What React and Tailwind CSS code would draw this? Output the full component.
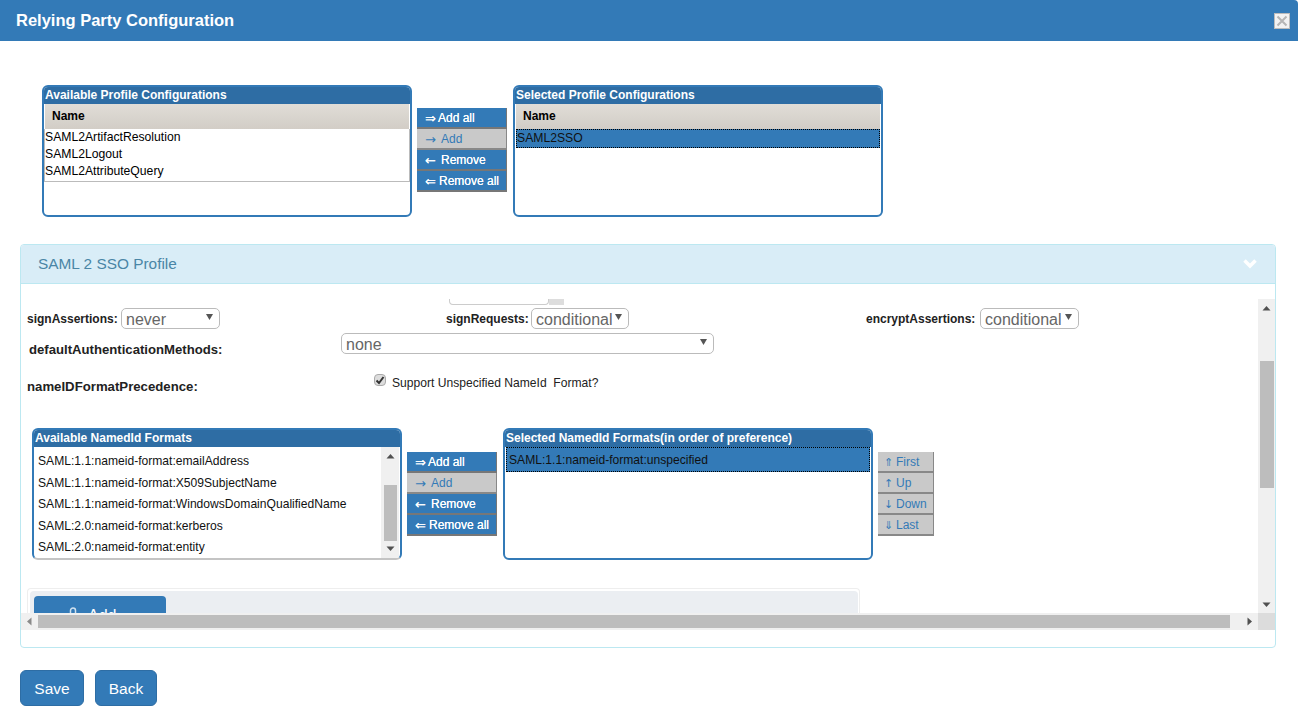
const mainButtons = [
  { arrow: '⇒', label: 'Add all', on: true, arrowClass: 'w-[13px]' },
  { arrow: '→', label: 'Add', on: false, arrowClass: 'w-[16px]' },
  { arrow: '←', label: 'Remove', on: true, arrowClass: 'w-[16px]' },
  { arrow: '⇐', label: 'Remove all', on: true, arrowClass: 'w-[14px]' },
];

const orderButtons = [
  { arrow: '⇑', label: 'First' },
  { arrow: '↑', label: 'Up' },
  { arrow: '↓', label: 'Down' },
  { arrow: '⇓', label: 'Last' },
];

const availableFormats = [
  'SAML:1.1:nameid-format:emailAddress',
  'SAML:1.1:nameid-format:X509SubjectName',
  'SAML:1.1:nameid-format:WindowsDomainQualifiedName',
  'SAML:2.0:nameid-format:kerberos',
  'SAML:2.0:nameid-format:entity',
];

function Arrow({ dir }) {
  const points = {
    up: '0.5,6.500 4.500,2 8.500,6.500',
    down: '0.5,2.500 8.500,2.500 4.500,7',
    left: '6.500,0.500 6.500,8.500 2,4.500',
    right: '2.500,0.500 2.500,8.500 7,4.500',
  };
  return (
    <svg width="9" height="9" viewBox="0 0 9 9" className="shrink-0">
      <polygon points={points[dir]} fill={dir === 'left' ? '#8a8a8a' : '#505050'} />
    </svg>
  );
}

function Panel({ title, children, className = '' }) {
  return (
    <div className={`h-[132px] overflow-hidden rounded-md border-2 border-[#337ab7] bg-white ${className}`}>
      <div className="h-[17px] bg-[#2e6da4] pl-px text-[12px] leading-[17px] font-bold text-white">{title}</div>
      {children}
    </div>
  );
}

function TableHead() {
  return (
    <div className="mx-px h-[25px] bg-gradient-to-b from-[#e0ddd7] to-[#d2cdc6] pl-[7px] text-[12px] leading-[25px] font-bold text-black">
      Name
    </div>
  );
}

function ActionButtons({ className = '' }) {
  return (
    <div className={`flex w-[90px] flex-col ${className}`}>
      {mainButtons.map((b) => (
        <div
          key={b.label}
          className={`flex h-[21px] border-r border-b-2 pl-2 text-[12px] leading-[21px] ${
            b.on
              ? 'border-[#777] bg-[#337ab7] text-white [text-shadow:0_0_0.4px_white]'
              : 'border-[#888] bg-[#c9c9c9] text-[#337ab7]'
          }`}
        >
          <span className={`${b.arrowClass} font-['DejaVu_Sans',sans-serif] text-[13px]`}>{b.arrow}</span>
          <span>{b.label}</span>
        </div>
      ))}
    </div>
  );
}

function Select({ value, className = '' }) {
  return (
    <div className={`relative h-[21px] ${className}`}>
      <select
        defaultValue={value}
        className="h-full w-full appearance-none rounded-[5px] border border-[#bbb] bg-white pt-px pl-1 text-[16px] leading-[19px] font-normal text-[#666]"
      >
        <option>{value}</option>
      </select>
      <svg width="7" height="6" viewBox="0 0 7 6" className="pointer-events-none absolute top-[6px] right-[7px]">
        <polygon points="0,0 7,0 3.500,6" fill="#555" />
      </svg>
    </div>
  );
}

export default function App() {
  return (
    <div className="h-[727px] overflow-hidden bg-white font-['Liberation_Sans',Arial,sans-serif]">
      <header className="flex h-[41px] items-center justify-between rounded-tr-sm bg-[#337ab7] pr-2 pl-4">
        <h1 className="text-[16.5px] font-bold text-white">Relying Party Configuration</h1>
        <button className="flex h-4 w-4 items-center justify-center border border-[#bbb] bg-[#f2f2f2]">
          <svg width="12" height="12" viewBox="0 0 12 12">
            <path d="M1.500 1.500 10.500 10.500M10.500 1.500 1.500 10.500" stroke="#b5b5b5" strokeWidth="2" />
          </svg>
        </button>
      </header>

      <main className="px-5">
        <div className="flex pt-[44px] pl-[22px]">
          <Panel title="Available Profile Configurations" className="w-[370px]">
            <TableHead />
            <div className="border-x border-b border-[#bbb] pb-px text-[12.200px] leading-[17px] text-black">
              <div>SAML2ArtifactResolution</div>
              <div>SAML2Logout</div>
              <div>SAML2AttributeQuery</div>
            </div>
          </Panel>
          <ActionButtons className="mt-[23px] ml-[5px]" />
          <Panel title="Selected Profile Configurations" className="ml-[6px] w-[370px]">
            <TableHead />
            <div className="mx-px h-[19px] bg-[#337ab7] pl-px text-[12.200px] leading-[18px] text-[#111] outline-1 outline-offset-[-1px] outline-black outline-dotted">
              SAML2SSO
            </div>
          </Panel>
        </div>

        <section className="mt-[27px] h-[404px] w-[1256px] overflow-hidden rounded border border-[#bce8f1]">
          <div className="flex h-[39px] items-center justify-between border-b border-[#bce8f1] bg-[#d9edf7] px-[17px]">
            <h2 className="text-[15.400px] text-[#4a86a6]">SAML 2 SSO Profile</h2>
            <svg width="16" height="12" viewBox="0 0 16 12">
              <path d="M2.500 2.500 8 8l5.500-5.500" fill="none" stroke="#fff" strokeWidth="3.500" />
            </svg>
          </div>

          <div className="pt-[15px]">
            <div className="flex h-[331px]">
              <div className="flex min-w-0 flex-1 flex-col">
                <div className="h-[314px] overflow-hidden pl-[6px]">
                  {/* clipped field scrolled out of the top */}
                  <div className="ml-[422px] flex h-[6px] w-[115px]">
                    <div className="flex-1 rounded-b-sm border border-t-0 border-[#ccc]" />
                    <div className="w-[15px] bg-[#ddd]" />
                  </div>

                  <div className="mt-[3px] flex h-[21px] items-center text-[12px] font-bold text-[#222]">
                    <span className="w-[94px]">signAssertions:</span>
                    <Select value="never" className="w-[99px]" />
                    <span className="ml-[226px] w-[85px]">signRequests:</span>
                    <Select value="conditional" className="w-[98px]" />
                    <span className="ml-[237px] w-[114px]">encryptAssertions:</span>
                    <Select value="conditional" className="w-[99px]" />
                  </div>

                  <div className="mt-[4px] flex h-[21px] text-[13.150px] font-bold text-[#222]">
                    <span className="mt-[8px] ml-[2px] w-[312px] leading-[18px]">defaultAuthenticationMethods:</span>
                    <Select value="none" className="w-[373px]" />
                  </div>

                  <div className="mt-[20px] flex h-[24px]">
                    <span className="mt-[4px] w-[347px] text-[13.200px] leading-[18px] font-bold text-[#222]">nameIDFormatPrecedence:</span>
                    <span className="flex h-3 w-3 items-center justify-center rounded-sm border border-[#aaa] bg-[#ddd]">
                      <svg width="10" height="10" viewBox="0 0 10 10">
                        <path d="M1.500 5.500 4 8l4.500-6" fill="none" stroke="#333" strokeWidth="2" />
                      </svg>
                    </span>
                    <span className="ml-[6px] pt-px text-[12.100px] leading-[16px] whitespace-pre text-[#222]">Support Unspecified NameId  Format?</span>
                  </div>

                  <div className="mt-[30px] ml-[5px] flex">
                    <Panel title="Available NamedId Formats" className="w-[370px] border-b-[#c4c4c4]">
                      <div className="flex h-[111px]">
                        <div className="flex-1 pt-[4px] pl-1 text-[12.100px] leading-[21.500px] text-[#111]">
                          {availableFormats.map((f) => (
                            <div key={f}>{f}</div>
                          ))}
                        </div>
                        <div className="mr-px flex w-[18px] flex-col items-center bg-[#f0f0f0] pt-[5px] pb-[5px]">
                          <Arrow dir="up" />
                          <div className="mt-[24px] h-[56px] w-[13px] bg-[#bdbdbd]" />
                          <div className="mt-auto">
                            <Arrow dir="down" />
                          </div>
                        </div>
                      </div>
                    </Panel>
                    <ActionButtons className="mt-[24px] ml-[5px]" />
                    <Panel title="Selected NamedId Formats(in order of preference)" className="ml-[6px] w-[370px]">
                      <div className="mx-px h-[25px] bg-[#337ab7] pl-[3px] text-[12.100px] leading-[27px] text-[#111] outline-1 outline-offset-[-1px] outline-black outline-dotted">
                        SAML:1.1:nameid-format:unspecified
                      </div>
                    </Panel>
                    <div className="mt-[24px] ml-[5px] flex w-[56px] flex-col">
                      {orderButtons.map((b) => (
                        <div
                          key={b.label}
                          className="flex h-[21px] border-r border-b-2 border-[#888] bg-[#c9c9c9] pl-[6px] text-[12px] leading-[21px] text-[#337ab7]"
                        >
                          <span className="w-[12px] font-['DejaVu_Sans',sans-serif] text-[11px]">{b.arrow}</span>
                          <span>{b.label}</span>
                        </div>
                      ))}
                    </div>
                  </div>

                  <div className="mt-[28px] w-[833px] rounded-t border border-b-0 border-[#eee] pt-[2px] pr-px pl-[2px]">
                    <div className="h-[40px] rounded-t bg-[#ebeef2] px-[4px] pt-[5px]">
                      <button className="flex h-[34px] w-[132px] items-start gap-[9px] rounded-t bg-[#337ab7] pt-[11px] pl-[33px] text-[16px] leading-[18px] text-white">
                        <svg width="12" height="14" viewBox="0 0 12 14">
                          <path d="M3.500 12V3.500a2.500 2.500 0 0 1 5 0V12M1 8h10v5H1z" fill="none" stroke="#cfe0ee" strokeWidth="1.500" />
                        </svg>
                        Add
                      </button>
                    </div>
                  </div>
                </div>

                {/* horizontal scrollbar */}
                <div className="flex h-[17px] items-center bg-[#f0f0f0]">
                  <div className="flex w-[17px] justify-center">
                    <Arrow dir="left" />
                  </div>
                  <div className="h-[13px] w-[1192px] bg-[#bdbdbd]" />
                  <div className="flex flex-1 justify-end pr-[4px]">
                    <Arrow dir="right" />
                  </div>
                </div>
              </div>

              {/* vertical scrollbar */}
              <div className="flex w-[17px] flex-col">
                <div className="flex flex-1 flex-col items-center bg-[#f0f0f0] pt-[5px] pb-[4px]">
                  <Arrow dir="up" />
                  <div className="mt-[48px] h-[127px] w-[14px] bg-[#bdbdbd]" />
                  <div className="mt-auto">
                    <Arrow dir="down" />
                  </div>
                </div>
                <div className="h-[17px] bg-[#dcdcdc]" />
              </div>
            </div>
          </div>
        </section>

        <div className="mt-[22px] flex gap-[11px]">
          <button className="h-[36px] w-[64px] rounded-md border border-[#2e6da4] bg-[#337ab7] pt-px text-[15.500px] text-white">Save</button>
          <button className="h-[36px] w-[62px] rounded-md border border-[#2e6da4] bg-[#337ab7] pt-px text-[15.500px] text-white">Back</button>
        </div>
      </main>
    </div>
  );
}
